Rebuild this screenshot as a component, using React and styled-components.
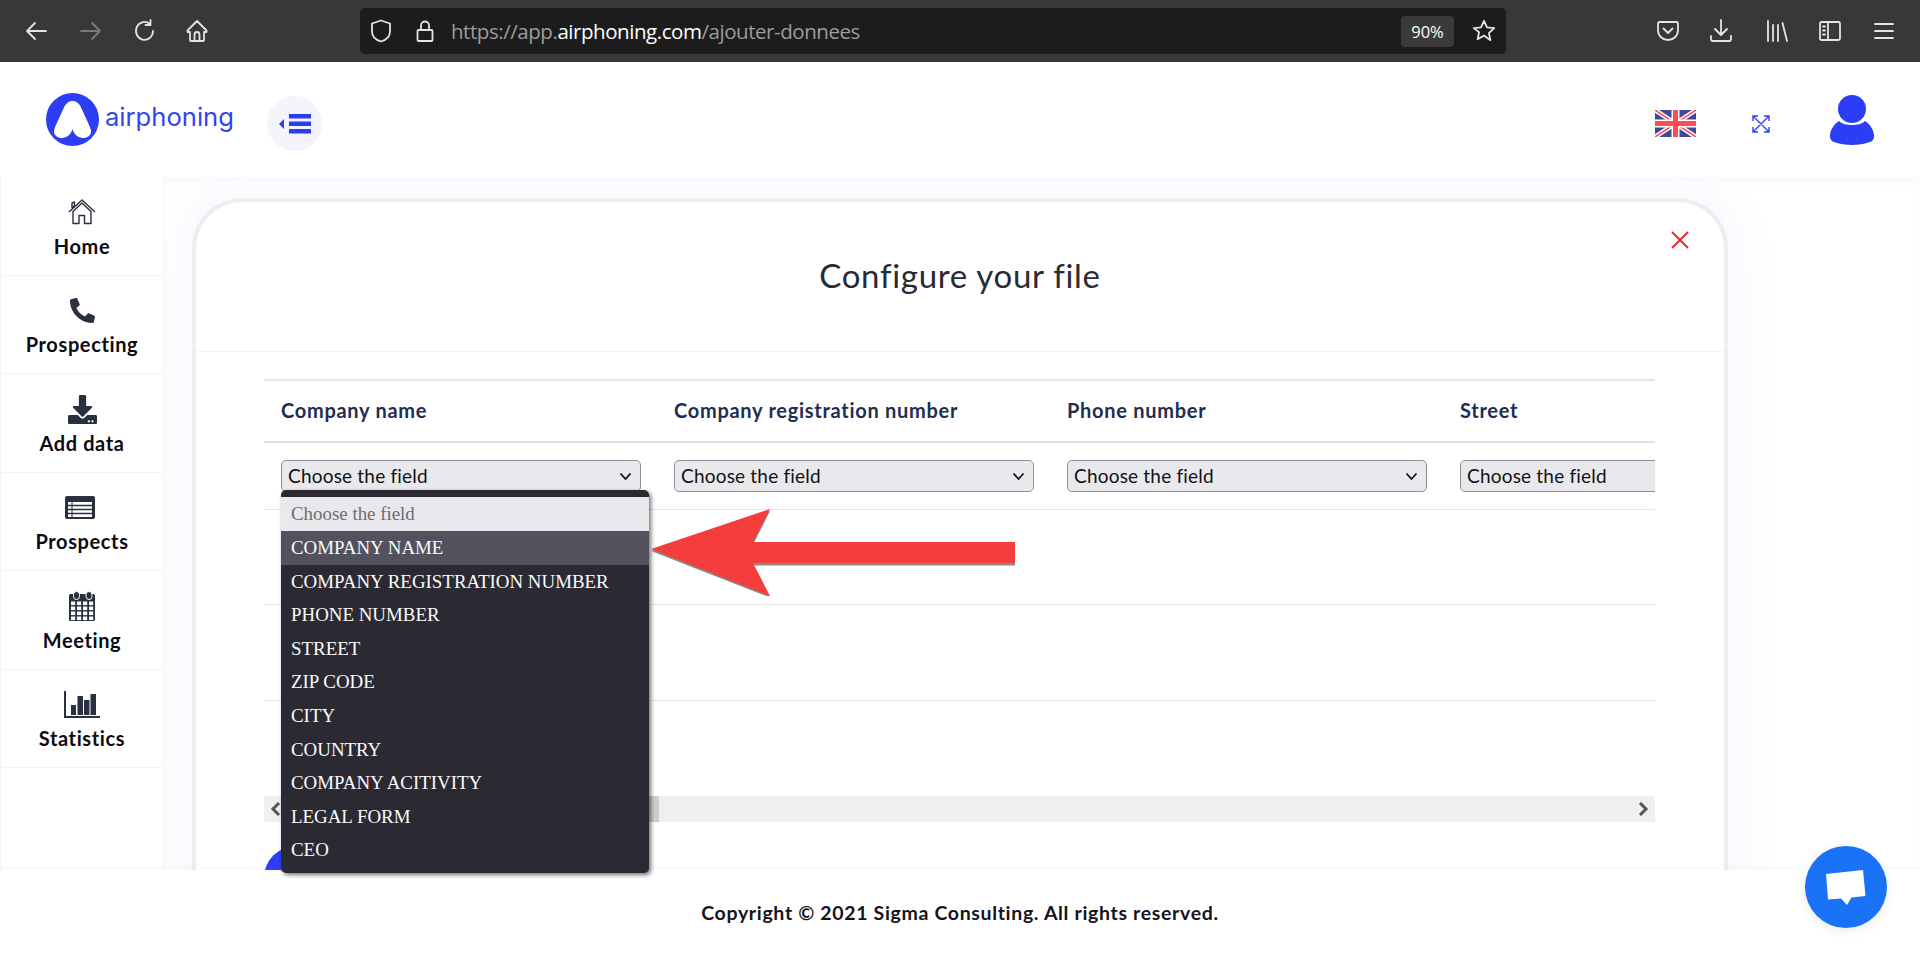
import React from "react";
import styled, { createGlobalStyle } from "styled-components";
import { FaPhoneAlt, FaDownload } from "react-icons/fa";

const Global = createGlobalStyle`
  html, body { margin: 0; padding: 0; height: 100%; background: #fff; overflow: hidden; }
  * { box-sizing: border-box; }
  body { font-family: "Lato", "Noto Sans", sans-serif; }
`;

const Page = styled.div`
  position: relative;
  width: 1920px;
  height: 955px;
  display: grid;
  grid-template-rows: 62px 115px 693px 85px;
  overflow: hidden;
`;

/* browser chrome */
const Chrome = styled.div`
  background: #383838;
  display: flex;
  align-items: center;
  padding-left: 24px;
  color: #e8e8e8;
`;
const ChromeIcon = styled.svg`
  width: 24px;
  height: 24px;
  margin-right: ${(p) => p.$gap || 0}px;
  flex: none;
  fill: none;
  stroke: ${(p) => p.$dim ? "#7a7a7a" : "#e4e4e4"};
  stroke-width: 1.8;
  stroke-linecap: round;
  stroke-linejoin: round;
`;
const UrlBar = styled.div`
  width: 1146px;
  height: 46px;
  margin-left: 151px;
  margin-right: 150px;
  background: #1c1c1c;
  border-radius: 5px;
  display: flex;
  align-items: center;
  padding: 0 10px 0 9px;
  flex: none;
`;
const UrlText = styled.div`
  font: 400 20.5px "Open Sans", sans-serif;
  color: #9c9c9c;
  margin-left: 14px;
  flex: 1;
  white-space: nowrap;
  letter-spacing: -0.45px;
  b { color: #fff; font-weight: 400; }
`;
const Zoom = styled.div`
  width: 53px;
  height: 31px;
  background: #3a3a3a;
  border-radius: 4px;
  color: #fff;
  font: 400 16.5px "Open Sans", sans-serif;
  display: flex;
  align-items: center;
  justify-content: center;
  margin-right: 18px;
`;

/* app header */
const Header = styled.header`
  background: #fff;
  display: flex;
  align-items: center;
  padding: 8px 0 0 46px;
`;
const Logo = styled.div`
  display: flex;
  align-items: center;
  width: 221px;
  flex: none;
  margin-top: -8px;
`;
const LogoText = styled.span`
  font: 400 25.6px "Inter", sans-serif;
  color: #3344f2;
  margin-left: 6px;
  margin-top: -6px;
  letter-spacing: 0;
`;
const Toggle = styled.button`
  width: 55px;
  height: 55px;
  border: 0;
  border-radius: 50%;
  background: #f5f3fc;
  display: flex;
  align-items: center;
  justify-content: center;
  padding: 0;
`;
const HeaderRight = styled.div`
  margin-left: auto;
  display: flex;
  align-items: center;
  padding-right: 46px;
`;
const Flag = styled.svg`
  width: 41px;
  height: 27px;
  margin-right: 56px;
`;
const Expand = styled.svg`
  width: 18px;
  height: 18px;
  margin-right: 60px;
  fill: none;
  stroke: #3040f0;
  stroke-width: 1.4;
`;
const UserIcon = styled.svg`
  width: 44px;
  height: 50px;
  fill: #2b3df5;
  margin-top: -8px;
`;

/* body */
const Content = styled.div`
  display: grid;
  grid-template-columns: 164px 1fr;
  min-height: 0;
  overflow: hidden;
  background: #fff;
`;
const Sidebar = styled.nav`
  background: #fff;
  border-left: 1px solid #f3f3f9;
  border-right: 1px solid #f3f3f9;
`;
const NavItem = styled.a`
  height: 98.5px;
  padding-top: 19px;
  display: flex;
  flex-direction: column;
  align-items: center;
  gap: 6.5px;
  border-bottom: 1px solid #f3f3f9;
  color: #0b0b12;
`;
const NavIcon = styled.div`
  height: 30px;
  display: flex;
  align-items: center;
  justify-content: center;
  color: #2a3040;
  margin-top: 1px;
`;
const NavLabel = styled.span`
  font: 700 20px/24px "Lato", sans-serif;
  letter-spacing: 0.62px;
`;
const Main = styled.main`
  position: relative;
  background: #fff;
  padding: 21px 192px 0 28px;
  overflow: hidden;
  min-height: 0;
  box-shadow: inset 0 8px 14px -6px rgba(110, 110, 240, 0.06);
`;
const Panel = styled.section`
  position: relative;
  width: 1536px;
  background: #fff;
  border: 4px solid #eeeef0;
  border-bottom: 0;
  border-radius: 50px 50px 0 0;
  height: 800px;
  box-shadow: 0 0 46px 12px rgba(110, 110, 250, 0.05);
`;
const PanelHeader = styled.div`
  height: 150px;
  border-bottom: 1px solid #f3f3f8;
  display: flex;
  align-items: center;
  justify-content: center;
  padding-bottom: 3px;
`;
const Title = styled.h2`
  margin: 0;
  font: 400 33px "Lato", sans-serif;
  color: #272b35;
  letter-spacing: 0.7px;
`;
const Close = styled.svg`
  position: absolute;
  top: 28px;
  right: 34px;
  width: 20px;
  height: 20px;
  stroke: #f02020;
  stroke-width: 1.8;
`;
const PanelBody = styled.div`
  padding: 27px 69px 0 68px;
`;
const TableWrap = styled.div`
  overflow: hidden;
  width: 1391px;
`;
const Row = styled.div`
  display: grid;
  grid-template-columns: repeat(4, 393px);
  width: 1600px;
  border-top: ${(p) => p.$top ? "2px solid #e2e6ea" : "none"};
  border-bottom: ${(p) => p.$bottom || "1px solid #e4e6ea"};
  height: ${(p) => p.$h}px;
`;
const HeadCell = styled.div`
  padding: 0 0 2px 17px;
  display: flex;
  align-items: center;
  font: 700 20px "Lato", sans-serif;
  color: #1d2e52;
  letter-spacing: 0.72px;
`;
const Cell = styled.div`
  padding: 17px 0 0 17px;
`;
const SelectBox = styled.div`
  width: 360px;
  height: 32px;
  border: 1px solid #8f8f9d;
  border-radius: 5px;
  background: #e9e9ed;
  color: #111;
  font: 400 19px/28px "Lato", sans-serif;
  padding: 0 8px 0 6px;
  display: flex;
  align-items: center;
  justify-content: space-between;
  letter-spacing: 0.2px;
`;
const Chevron = styled.svg`
  width: 13px;
  height: 9px;
  fill: none;
  stroke: #111;
  stroke-width: 1.8;
`;
const ScrollTrack = styled.div`
  height: 26px;
  background: #efefef;
  width: 1391px;
  display: flex;
  align-items: center;
  justify-content: space-between;
  position: relative;
  padding: 0 6px;
`;
const ScrollThumb = styled.div`
  position: absolute;
  left: 19px;
  top: 0;
  width: 376px;
  height: 100%;
  background: #cdcdcd;
`;
const ScrollArrow = styled.svg`
  position: relative;
  width: 11px;
  height: 14px;
  fill: none;
  stroke: #555;
  stroke-width: 3;
`;
const RoundButton = styled.div`
  width: 64px;
  height: 64px;
  border-radius: 50%;
  background: #2b3df5;
  margin-top: 24px;
`;

/* footer */
const Footer = styled.footer`
  background: #fff;
  display: flex;
  align-items: center;
  justify-content: center;
  padding-bottom: 1px;
  font: 700 19.5px "Lato", sans-serif;
  color: #14141c;
  letter-spacing: 0.66px;
  position: relative;
  box-shadow: 0 -3px 7px rgba(120, 170, 255, 0.06);
`;

/* overlays */
const Dropdown = styled.div`
  position: absolute;
  left: 281px;
  top: 490px;
  width: 368px;
  height: 383px;
  background: #2b2a33;
  border-radius: 5px;
  padding-top: 7px;
  box-shadow: 2px 2px 4px rgba(0, 0, 0, 0.55);
  font: 400 18.9px "Liberation Serif", "Times New Roman", serif;
  color: #fbfbfe;
  z-index: 5;
`;
const Option = styled.div`
  height: ${(p) => p.$h || 33.6}px;
  line-height: ${(p) => p.$lh || 34.6}px;
  padding-left: 10px;
  white-space: nowrap;
  background: ${(p) => p.$bg || "transparent"};
  color: ${(p) => p.$color || "#fbfbfe"};
`;
const Arrow = styled.svg`
  position: absolute;
  left: 649px;
  top: 506px;
  width: 370px;
  height: 90px;
  z-index: 6;
`;
const Chat = styled.div`
  position: absolute;
  left: 1805px;
  top: 846px;
  width: 82px;
  height: 82px;
  border-radius: 50%;
  background: #1a73f6;
  box-shadow: 0 3px 12px rgba(0, 0, 0, 0.08);
  display: flex;
  align-items: center;
  justify-content: center;
  z-index: 7;
`;

const Table = () => (
  <svg width="36" height="26" viewBox="0 0 36 26">
    <rect x="1" y="1" width="30" height="23" rx="2" fill="#2a3040" />
    <rect x="4" y="7" width="24" height="15" fill="#fff" />
    <path d="M4 10.5h24M4 14.5h24M4 18.5h24" stroke="#2a3040" strokeWidth="1.4" />
    <path d="M8 7v15" stroke="#2a3040" strokeWidth="1" />
  </svg>
);
const Calendar = () => (
  <svg width="30" height="30" viewBox="0 0 30 30">
    <path d="M2 4.5a1.5 1.5 0 0 1 1.500-1.500h23a1.500 1.500 0 0 1 1.500 1.500v24a1.500 1.500 0 0 1-1.500 1.500h-23a1.500 1.500 0 0 1-1.500-1.500z" fill="#2a3040" />
    <rect x="6.500" y="0.500" width="6" height="8" rx="3" fill="#2a3040" stroke="#fff" strokeWidth="1" />
    <rect x="19" y="0.500" width="6" height="8" rx="3" fill="#2a3040" stroke="#fff" strokeWidth="1" />
    {[10.5, 15.5, 20.5, 25.5].map((y) =>
      [4, 10, 16, 22].map((x) => (
        <rect key={x + "-" + y} x={x} y={y} width="4.2" height="3.6" fill="#fff" />
      ))
    )}
  </svg>
);
const Chart = () => (
  <svg width="36" height="27" viewBox="0 0 36 27">
    <path d="M1 0v26h35" fill="none" stroke="#2a3040" strokeWidth="2" />
    <path d="M7 14h5v10H7zM13.500 5h5.500v19h-5.500zM20 9h5.500v15H20zM26.500 3H32v21h-5.500z" fill="#2a3040" />
  </svg>
);
const Home = () => (
  <svg width="28" height="26" viewBox="0 0 28 26" fill="none" stroke="#2a3040" strokeWidth="1.4" strokeLinejoin="round">
    <path d="M1 13 14 1l13 12" />
    <path d="M4 4V9l2.500-2.500V3z" />
    <path d="M5 12.500V24.500h6v-8h5.500v8H23V12.500L14 4z" />
  </svg>
);

const items = [
  ["Home", <Home />],
  ["Prospecting", <FaPhoneAlt size={25} />],
  ["Add data", <FaDownload size={29} />],
  ["Prospects", <Table />],
  ["Meeting", <Calendar />],
  ["Statistics", <Chart />],
];
const cols = ["Company name", "Company registration number", "Phone number", "Street"];
const options = ["COMPANY REGISTRATION NUMBER", "PHONE NUMBER", "STREET", "ZIP CODE", "CITY", "COUNTRY", "COMPANY ACITIVITY", "LEGAL FORM", "CEO"];

export default function App() {
  return (
    <Page>
      <Global />
      <Chrome>
        <ChromeIcon viewBox="0 0 24 24" $gap={31}><path d="M22 12H3M11 4l-8 8 8 8" /></ChromeIcon>
        <ChromeIcon viewBox="0 0 24 24" $gap={30} $dim><path d="M2 12h19M13 4l8 8-8 8" /></ChromeIcon>
        <ChromeIcon viewBox="0 0 24 24" $gap={28}><path d="M20 12a8.500 9 0 1 1-3-7M17.500 1v5h-5" /></ChromeIcon>
        <ChromeIcon viewBox="0 0 24 24"><path d="M12 2 2.500 11.500V13H5v8a1 1 0 0 0 1 1h12a1 1 0 0 0 1-1v-8h2.500v-1.500zM9.500 22v-6.500a2.500 2.500 0 0 1 5 0V22" /></ChromeIcon>
        <UrlBar>
          <ChromeIcon viewBox="0 0 24 24" $gap={20}><path d="M12 1.500 3 4.500v8c0 5 4 8.500 9 10 5-1.500 9-5 9-10v-8z" /></ChromeIcon>
          <ChromeIcon viewBox="0 0 24 24"><path d="M8 11V6.500a4 4 0 0 1 8 0V11M5.500 11h13a1 1 0 0 1 1 1v9a1 1 0 0 1-1 1h-13a1 1 0 0 1-1-1v-9a1 1 0 0 1 1-1z" /></ChromeIcon>
          <UrlText>https://app.<b>airphoning.com</b>/ajouter-donnees</UrlText>
          <Zoom>90%</Zoom>
          <ChromeIcon viewBox="0 0 24 24"><path d="m12 1.800 3 6.600 7.200.8-5.300 4.900 1.500 7.100L12 16.600l-6.400 3.600 1.500-7.100L1.800 9.200 9 8.400z" /></ChromeIcon>
        </UrlBar>
        <ChromeIcon viewBox="0 0 24 24" $gap={29}><path d="M3.500 3h17A1.500 1.500 0 0 1 22 4.500V11c0 6-4.500 10-10 10S2 17 2 11V4.500A1.500 1.500 0 0 1 3.500 3zM7.500 9.500 12 14l4.500-4.500" /></ChromeIcon>
        <ChromeIcon viewBox="0 0 24 24" $gap={32}><path d="M12 1v14M6 10l6 6 6-6M2 17v3a2 2 0 0 0 2 2h16a2 2 0 0 0 2-2v-3" /></ChromeIcon>
        <ChromeIcon viewBox="0 0 24 24" $gap={29}><path d="M3 2v20M8 6v16M13 6v16M17.500 4 22 22" /></ChromeIcon>
        <ChromeIcon viewBox="0 0 24 24" $gap={30}><path d="M3.500 3h17A1.500 1.500 0 0 1 22 4.500v15a1.500 1.500 0 0 1-1.500 1.500h-17A1.500 1.500 0 0 1 2 19.500v-15A1.500 1.500 0 0 1 3.500 3zM10 3v18M5 7.500h2M5 11.500h2M5 15.500h2" /></ChromeIcon>
        <ChromeIcon viewBox="0 0 24 24"><path d="M3 5h18M3 12h18M3 19h18" /></ChromeIcon>
      </Chrome>

      <Header>
        <Logo>
          <svg width="53" height="53" viewBox="0 0 53 53">
            <circle cx="26.500" cy="26.500" r="26.500" fill="#2b3df5" />
            <path d="M26.500 8c-4 0-7 2.500-9 7.500L9.500 33c-1 2.500-1.500 4-1.500 5.500 0 4 3.500 6.500 8 6.500 5 0 9-3.500 10.500-9 1.500 5.500 5.500 9 10.500 9 4.500 0 8-2.500 8-6.500 0-1.500-.5-3-1.500-5.500L35.500 15.500c-2-5-5-7.500-9-7.500z" fill="#fff" />
          </svg>
          <LogoText>airphoning</LogoText>
        </Logo>
        <Toggle aria-label="menu">
          <svg width="32" height="20" viewBox="0 0 32 20" fill="#2b3df5">
            <path d="M0 10 5 5v10zM10 0h22v4.500H10zM10 7.500h22V12H10zM10 15h22v4.500H10z" />
          </svg>
        </Toggle>
        <HeaderRight>
          <Flag viewBox="0 0 41 27">
            <rect width="41" height="27" rx="1.500" fill="#41479b" />
            <path d="M0 0 41 27M41 0 0 27" stroke="#fff" strokeWidth="4.500" />
            <path d="M0 0 41 27M41 0 0 27" stroke="#ff4b55" strokeWidth="1.500" />
            <path d="M20.500 0v27M0 13.500h41" stroke="#fff" strokeWidth="8" />
            <path d="M20.500 0v27M0 13.500h41" stroke="#ff4b55" strokeWidth="5" />
          </Flag>
          <Expand viewBox="0 0 18 18">
            <path d="M1 1 17 17M17 1 1 17M1 6V1h5M12 1h5v5M17 12v5h-5M6 17H1v-5" />
          </Expand>
          <UserIcon viewBox="0 0 44 50">
            <circle cx="22" cy="14" r="14" />
            <path d="M9 26c3 3 8 4 13 4s10-1 13-4c5 3 9 9 9 15 0 3-1 5-4 6-5 2-12 3-18 3s-13-1-18-3c-3-1-4-3-4-6 0-6 4-12 9-15z" />
          </UserIcon>
        </HeaderRight>
      </Header>

      <Content>
        <Sidebar>
          {items.map(([label, icon]) => (
            <NavItem key={label}>
              <NavIcon>{icon}</NavIcon>
              <NavLabel>{label}</NavLabel>
            </NavItem>
          ))}
        </Sidebar>
        <Main>
          <Panel>
            <PanelHeader><Title>Configure your file</Title></PanelHeader>
            <Close viewBox="0 0 20 20"><path d="M2 2 18 18M18 2 2 18" /></Close>
            <PanelBody>
              <TableWrap>
                <Row $top $h={64} $bottom="2px solid #dee2e6">
                  {cols.map((c) => <HeadCell key={c}>{c}</HeadCell>)}
                </Row>
                <Row $h={67}>
                  {cols.map((c) => (
                    <Cell key={c}>
                      <SelectBox>
                        Choose the field
                        <Chevron viewBox="0 0 13 9"><path d="M1.500 1.500 6.500 7l5-5.500" /></Chevron>
                      </SelectBox>
                    </Cell>
                  ))}
                </Row>
                <Row $h={95} />
                <Row $h={96} />
                <Row $h={95} $bottom="none" />
              </TableWrap>
              <ScrollTrack>
                <ScrollThumb />
                <ScrollArrow viewBox="0 0 11 14"><path d="M9 1 3 7l6 6" /></ScrollArrow>
                <ScrollArrow viewBox="0 0 11 14"><path d="m2 1 6 6-6 6" /></ScrollArrow>
              </ScrollTrack>
              <RoundButton />
            </PanelBody>
          </Panel>
        </Main>
      </Content>

      <Footer>Copyright © 2021 Sigma Consulting. All rights reserved.</Footer>

      <Dropdown>
        <Option $h={34} $lh={33} $bg="#e9e9ed" $color="#6d6d6d">Choose the field</Option>
        <Option $bg="#52525e">COMPANY NAME</Option>
        {options.map((o) => <Option key={o}>{o}</Option>)}
      </Dropdown>
      <Arrow viewBox="0 0 370 90">
        <path d="M2 44 121 4l-17 34h262v20.500H104l17 32z" fill="#8a8a8a" transform="translate(0 1)" />
        <path d="M2 43 121 3l-17 33h262v21H104l17 33z" fill="#f43d3d" />
      </Arrow>
      <Chat>
        <svg width="40" height="35" viewBox="0 0 40 35" fill="#fff">
          <path d="M0 4 37 0l2.500 26-14 1.500L21 35l-6-6.500-13 1z" />
        </svg>
      </Chat>
    </Page>
  );
}
